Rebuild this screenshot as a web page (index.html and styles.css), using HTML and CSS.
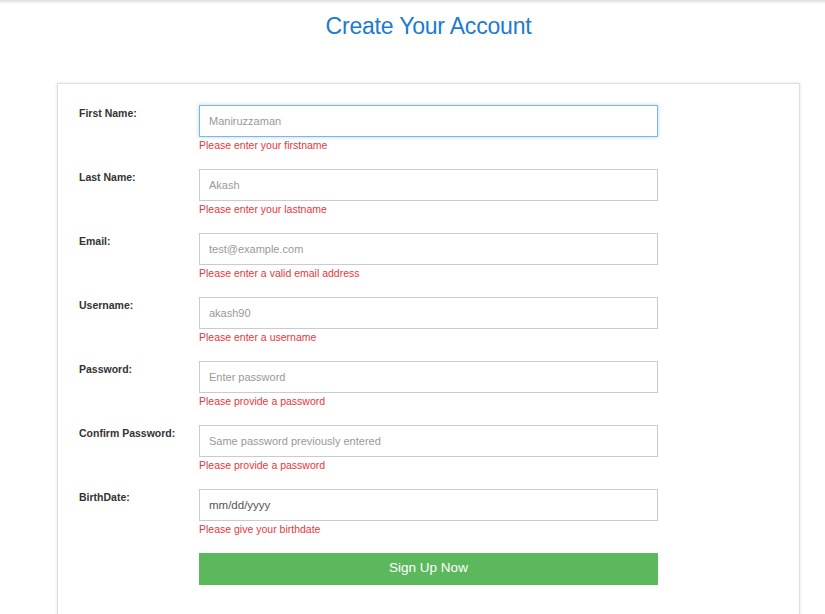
FILE: index.html
```html
<!DOCTYPE html>
<html>
<head>
<meta charset="utf-8">
<title>Create Your Account</title>
<link rel="stylesheet" href="styles.css">
</head>
<body>
<div class="topbar"></div>
<div class="page">
<h1 class="title">Create Your Account</h1>
<div class="card">
  <form class="form">
    <div class="row">
      <label class="label">First Name:</label>
      <div class="field">
        <input class="input focus" type="text" placeholder="Maniruzzaman">
        <div class="error">Please enter your firstname</div>
      </div>
    </div>
    <div class="row">
      <label class="label">Last Name:</label>
      <div class="field">
        <input class="input" type="text" placeholder="Akash">
        <div class="error">Please enter your lastname</div>
      </div>
    </div>
    <div class="row">
      <label class="label">Email:</label>
      <div class="field">
        <input class="input" type="text" placeholder="test@example.com">
        <div class="error">Please enter a valid email address</div>
      </div>
    </div>
    <div class="row">
      <label class="label">Username:</label>
      <div class="field">
        <input class="input" type="text" placeholder="akash90">
        <div class="error">Please enter a username</div>
      </div>
    </div>
    <div class="row">
      <label class="label">Password:</label>
      <div class="field">
        <input class="input" type="text" placeholder="Enter password">
        <div class="error">Please provide a password</div>
      </div>
    </div>
    <div class="row">
      <label class="label">Confirm Password:</label>
      <div class="field">
        <input class="input" type="text" placeholder="Same password previously entered">
        <div class="error">Please provide a password</div>
      </div>
    </div>
    <div class="row">
      <label class="label">BirthDate:</label>
      <div class="field">
        <input class="input date" type="text" value="mm/dd/yyyy">
        <div class="error">Please give your birthdate</div>
      </div>
    </div>
    <div class="row">
      <span class="label"></span>
      <div class="field">
        <button class="btn" type="button">Sign Up Now</button>
      </div>
    </div>
  </form>
</div>
</div>
</body>
</html>
```
FILE: styles.css
```css
html, body {
  margin: 0;
  padding: 0;
  background: #fff;
  font-family: "Liberation Sans", Arial, sans-serif;
  overflow: hidden;
}
.topbar {
  height: 4px;
  background: linear-gradient(to bottom, #dcdcdc, #f6f6f6 70%, #fff);
}
.page {
  margin-left: 57px;
  width: 743px;
}
.title {
  margin: 9px 0 0;
  text-align: center;
  font-size: 23px;
  font-weight: normal;
  line-height: 27px;
  color: #1b7bd0;
  letter-spacing: -0.2px;
}
.card {
  margin-top: 43px;
  height: 560px;
  border: 1px solid #dedede;
  box-shadow: 0 0 3px rgba(0, 0, 0, 0.12);
  background: #fff;
}
.form {
  padding: 21px 0 0 21px;
}
.row {
  display: grid;
  grid-template-columns: 120px 459px;
  margin-bottom: 16px;
}
.label {
  font-size: 10.5px;
  font-weight: bold;
  color: #333;
  padding-top: 2px;
  line-height: 12px;
}
.input {
  display: block;
  box-sizing: border-box;
  width: 459px;
  height: 32px;
  margin: 0;
  padding: 0 9px;
  border: 1px solid #cbcbcb;
  font-family: "Liberation Sans", Arial, sans-serif;
  font-size: 11px;
  color: #555;
  background: #fff;
  outline: none;
}
.input::placeholder {
  color: #999;
}
.input.focus {
  border-color: #7fb6e4;
  box-shadow: 0 0 4px rgba(102, 175, 233, 0.5);
}
.input.date {
  color: #555;
  font-size: 11.5px;
}
.error {
  font-size: 10.5px;
  line-height: 16px;
  color: #e4383d;
}
.btn {
  display: block;
  width: 459px;
  height: 32px;
  border: none;
  margin: 0;
  background: #5cb85c;
  color: #fff;
  font-family: "Liberation Sans", Arial, sans-serif;
  font-size: 13.5px;
  line-height: 30px;
  padding: 0 0 2px;
  cursor: pointer;
}
```
